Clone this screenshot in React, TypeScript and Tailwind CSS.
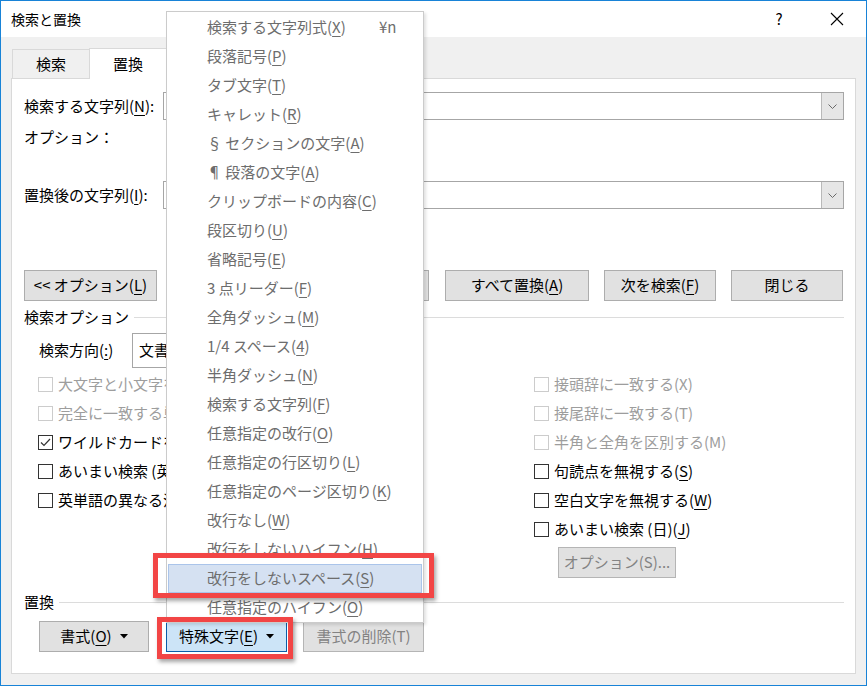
import clsx from "clsx";

// "&" marks the access key that gets underlined, like a Win32 resource string
function Acc({ text }: { text: string }) {
  const i = text.indexOf("&");
  if (i < 0) return <>{text}</>;
  return (
    <>
      {text.slice(0, i)}
      <span className="underline decoration-1 underline-offset-[3px]">{text[i + 1]}</span>
      {text.slice(i + 2)}
    </>
  );
}

function Caret() {
  return (
    <svg width="8" height="5" viewBox="0 0 8 5" className="ml-[8px]">
      <path d="M0 0h8L4 4.5z" fill="#000" />
    </svg>
  );
}

function Btn({
  text,
  className,
  disabled,
  focus,
  caret,
}: {
  text: string;
  className?: string;
  disabled?: boolean;
  focus?: boolean;
  caret?: boolean;
}) {
  return (
    <div
      className={clsx(
        "flex h-[31px] items-center justify-center border text-[15px]",
        disabled && "border-[#b5b5b5] bg-[#e1e1e1] text-[#838383]",
        focus && "border-[#0a5da8] bg-[#cce4f7] text-black",
        !disabled && !focus && "border-[#adadad] bg-[#e1e1e1] text-black",
        className
      )}
    >
      <span>
        <Acc text={text} />
      </span>
      {caret && <Caret />}
    </div>
  );
}

function Combo() {
  return (
    <div className="flex h-[28px] flex-1 border border-[#a6a6a6] bg-white">
      <div className="flex-1" />
      <div className="flex w-[22px] items-center justify-center border-l border-[#b9b9b9] bg-[#e6e6e6]">
        <svg width="9" height="5" viewBox="0 0 9 5">
          <path d="M0.5 0.5L4.5 4.5L8.5 0.5" stroke="#6a6a6a" strokeWidth="1" fill="none" />
        </svg>
      </div>
    </div>
  );
}

function Check({ text, checked, disabled }: { text: string; checked?: boolean; disabled?: boolean }) {
  return (
    <div className="flex h-[29px] items-center gap-[5px] whitespace-nowrap">
      <span
        className={clsx(
          "flex h-[15px] w-[15px] shrink-0 items-center justify-center border bg-white",
          disabled ? "border-[#cccccc]" : "border-[#333333]"
        )}
      >
        {checked && (
          <svg width="11" height="9" viewBox="0 0 11 9">
            <path d="M1 4.5L4 7.5L10 1" stroke="#333" strokeWidth="1.2" fill="none" />
          </svg>
        )}
      </span>
      <span className={clsx("text-[15px]", disabled ? "text-[#9d9d9d]" : "text-black")}>
        <Acc text={text} />
      </span>
    </div>
  );
}

function Section({ title }: { title: string }) {
  return (
    <div className="flex h-full items-center gap-[5px]">
      <span className="text-[15px] text-black">{title}</span>
      <div className="h-px flex-1 bg-[#dcdcdc]" />
    </div>
  );
}

const MENU: { text: string; key?: string }[] = [
  { text: "検索する文字列式(&X)", key: "¥n" },
  { text: "段落記号(&P)" },
  { text: "タブ文字(&T)" },
  { text: "キャレット(&R)" },
  { text: "§ セクションの文字(&A)" },
  { text: "¶ 段落の文字(&A)" },
  { text: "クリップボードの内容(&C)" },
  { text: "段区切り(&U)" },
  { text: "省略記号(&E)" },
  { text: "3 点リーダー(&F)" },
  { text: "全角ダッシュ(&M)" },
  { text: "1/4 スペース(&4)" },
  { text: "半角ダッシュ(&N)" },
  { text: "検索する文字列(&F)" },
  { text: "任意指定の改行(&O)" },
  { text: "任意指定の行区切り(&L)" },
  { text: "任意指定のページ区切り(&K)" },
  { text: "改行なし(&W)" },
  { text: "改行をしないハイフン(&H)" },
  { text: "改行をしないスペース(&S)" },
  { text: "任意指定のハイフン(&O)" },
];

const HOVER = 19;

export default function App() {
  return (
    <div className="relative flex h-[686px] w-[867px] flex-col overflow-hidden border border-[#1883d7] bg-[#f0f0f0] font-['Noto_Sans_CJK_JP','Noto_Sans',sans-serif] text-black">
      {/* title bar */}
      <div className="flex h-[36px] shrink-0 items-center bg-white pl-[10px]">
        <span className="text-[14px]">検索と置換</span>
        <div className="ml-auto flex items-center">
          <div className="flex w-[46px] justify-center text-[15px]">?</div>
          <div className="ml-[12px] mr-[6px] flex w-[46px] justify-center">
            <svg width="14" height="14" viewBox="0 0 14 14">
              <path d="M1 1L13 13M13 1L1 13" stroke="#000" strokeWidth="1.1" />
            </svg>
          </div>
        </div>
      </div>

      {/* tabs */}
      <div className="mt-[11px] flex h-[30px] shrink-0 items-end pl-[11px]">
        <div className="flex h-[29px] w-[78px] items-center justify-center border border-b-0 border-[#d9d9d9] bg-[#f0f0f0] text-[15px]">
          検索
        </div>
        <div className="relative z-10 -mb-px ml-[-1px] flex h-[31px] w-[78px] items-center justify-center border border-b-0 border-[#d9d9d9] bg-white text-[15px]">
          置換
        </div>
      </div>

      {/* page */}
      <div className="mx-[10px] mb-[11px] flex flex-1 flex-col border border-[#d9d9d9] bg-white pl-[12px] pr-[11px] text-[15px]">
        <div className="mt-[13px] flex h-[28px] items-center">
          <span className="w-[139px]">
            <Acc text="検索する文字列(&N):" />
          </span>
          <Combo />
        </div>
        <div className="flex h-[34px] items-center">オプション：</div>
        <div className="mt-[27px] flex h-[28px] items-center">
          <span className="w-[139px]">
            <Acc text="置換後の文字列(&I):" />
          </span>
          <Combo />
        </div>

        <div className="mt-[61px] flex h-[31px] items-center">
          <Btn text="<< オプション(&L)" className="w-[133px]" />
          <div className="ml-auto mr-px flex gap-[15px]">
            <Btn text="置換(&R)" className="mr-px w-[112px]" />
            <Btn text="すべて置換(&A)" className="w-[144px]" />
            <Btn text="次を検索(&F)" className="w-[112px]" />
            <Btn text="閉じる" className="w-[112px]" />
          </div>
        </div>

        <div className="h-[32px]">
          <Section title="検索オプション" />
        </div>

        <div className="flex">
          <div className="w-[510px]">
            <div className="flex h-[35px] items-center pl-[15px]">
              <span className="w-[93px]">
                <Acc text="検索方向(&:)" />
              </span>
              <div className="flex h-[35px] w-[160px] items-center border border-[#a6a6a6] pl-[6px]">文書全体</div>
            </div>
            <div className="mt-[2px] pl-[14px]">
              <Check text="大文字と小文字を区別する(H)" disabled />
              <Check text="完全に一致する単語だけを検索する(Y)" disabled />
              <Check text="ワイルドカードを使用する(&U)" checked />
              <Check text="あいまい検索 (英)(&K)" />
              <Check text="英単語の異なる活用形も検索する(&W)" />
            </div>
          </div>
          <div className="pt-[37px]">
            <Check text="接頭辞に一致する(X)" disabled />
            <Check text="接尾辞に一致する(T)" disabled />
            <Check text="半角と全角を区別する(M)" disabled />
            <Check text="句読点を無視する(&S)" />
            <Check text="空白文字を無視する(&W)" />
            <Check text="あいまい検索 (日)(&J)" />
            <Btn text="オプション(S)..." disabled className="ml-[24px] mt-[3px] w-[118px]" />
          </div>
        </div>

        <div className="mt-[11px] h-[26px]">
          <Section title="置換" />
        </div>
        <div className="mt-[6px] flex pl-[15px]">
          <Btn text="書式(&O)" caret className="w-[110px]" />
          <Btn text="特殊文字(&E)" caret focus className="ml-[17px] w-[121px]" />
          <Btn text="書式の削除(T)" disabled className="ml-[16px] w-[121px]" />
        </div>
      </div>

      {/* special character popup menu */}
      <div className="absolute left-[165px] top-[10px] z-20 w-[258px] border border-[#cbcbcb] bg-white pt-px text-[15px] text-[#6d6d6d] shadow-[2px_2px_3px_rgba(0,0,0,0.12)]">
        {MENU.map((m, i) => (
          <div
            key={i}
            className={clsx(
              "mx-px flex h-[29px] items-center border pl-[38px] whitespace-nowrap",
              i === HOVER ? "border-[#aac4ea] bg-[#d5e1f2]" : "border-transparent"
            )}
          >
            <span className={m.key ? "w-[172px]" : ""}>
              <Acc text={m.text} />
            </span>
            {m.key && <span>{m.key}</span>}
          </div>
        ))}
      </div>

      {/* red annotation frames */}
      <div className="absolute left-[152px] top-[552px] z-30 h-[45px] w-[281px] border-[5px] border-[#f24545] shadow-[2px_3px_4px_rgba(0,0,0,0.35)]" />
      <div className="absolute left-[156px] top-[616px] z-30 h-[42px] w-[136px] border-[5px] border-[#f24545] shadow-[2px_3px_4px_rgba(0,0,0,0.35)]" />
    </div>
  );
}
